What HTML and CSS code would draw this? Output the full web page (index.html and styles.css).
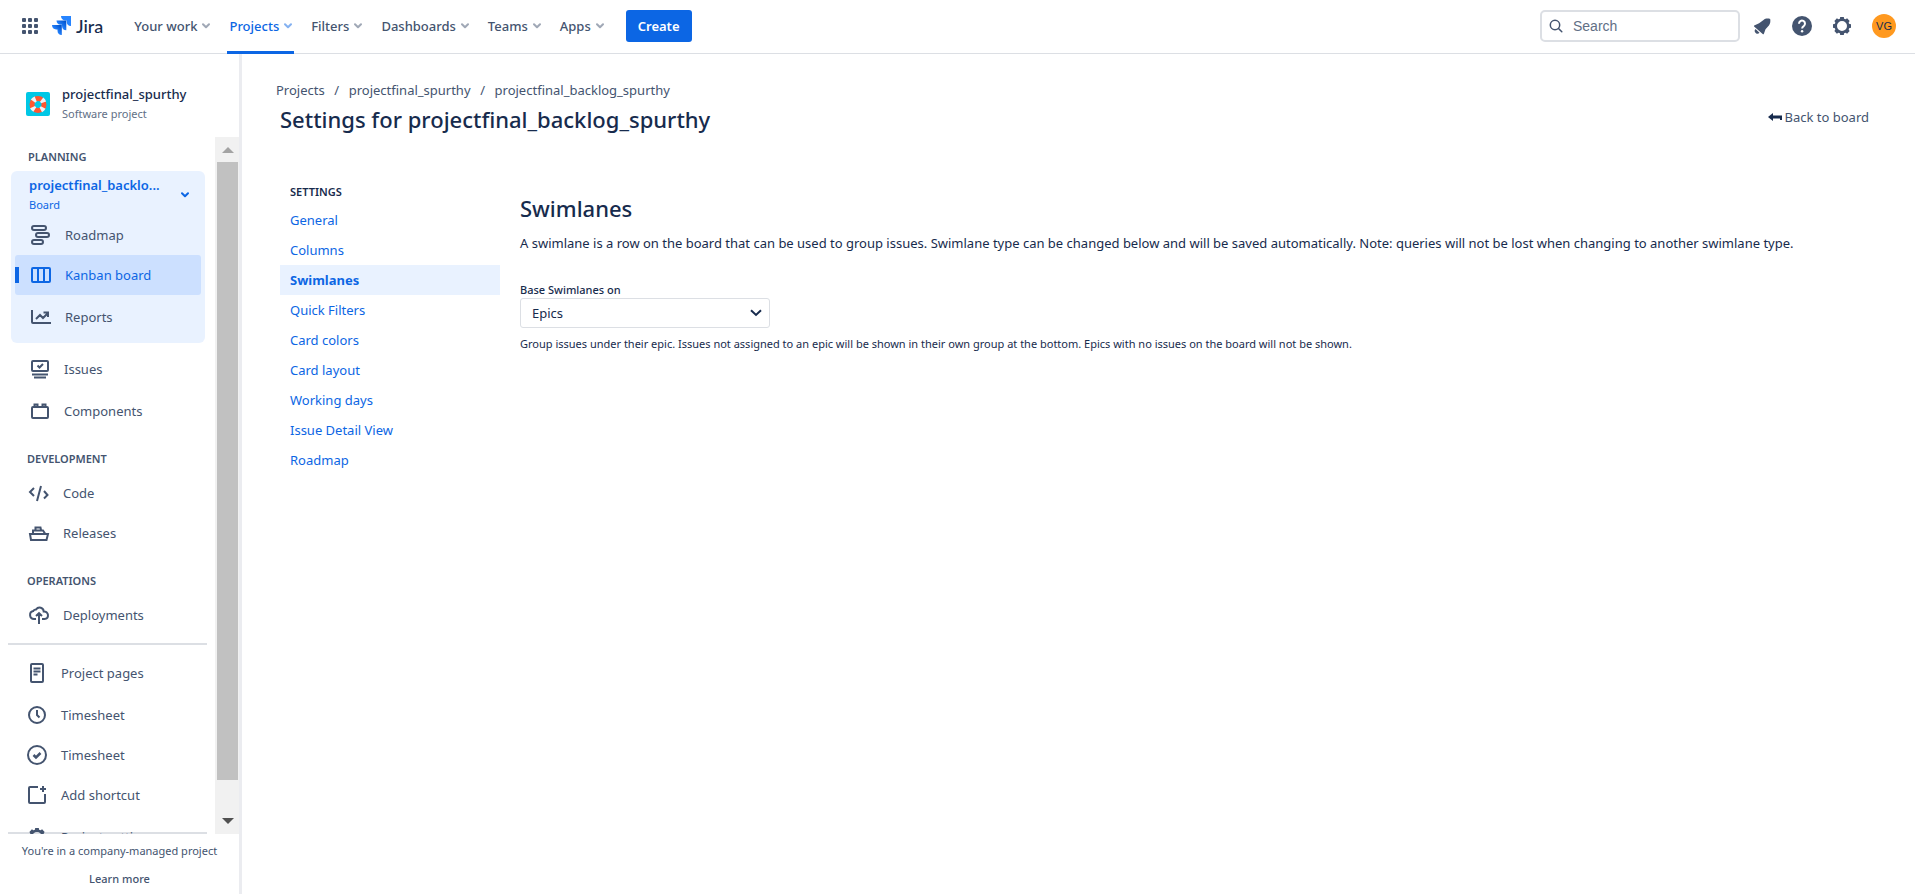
FILE: index.html
```html
<!DOCTYPE html>
<html lang="en">
<head>
<meta charset="utf-8">
<title>Settings for projectfinal_backlog_spurthy - Jira</title>
<link rel="stylesheet" href="styles.css">
</head>
<body>
<svg class="sprite" aria-hidden="true">
  <symbol id="chev" viewBox="0 0 8 6"><path d="M1 1.2l3 3 3-3" fill="none" stroke="currentColor" stroke-width="2" stroke-linecap="round" stroke-linejoin="round"/></symbol>
  <symbol id="gear" viewBox="0 0 24 24"><circle cx="12" cy="12" r="6.2" fill="none" stroke="currentColor" stroke-width="2.4"/><g fill="currentColor"><g id="teeth"><path d="M10.200 3h3.600l.6 3h-4.800zM10.200 21h3.600l.6-3h-4.800z"/></g><use href="#teeth" transform="rotate(45 12 12)"/><use href="#teeth" transform="rotate(90 12 12)"/><use href="#teeth" transform="rotate(135 12 12)"/></g></symbol>
</svg>
<header class="topbar">
  <button class="icon-btn switcher" aria-label="App switcher">
    <svg width="16" height="16" viewBox="0 0 16 16" fill="currentColor"><rect width="4" height="4" rx="1"/><rect x="6" width="4" height="4" rx="1"/><rect x="12" width="4" height="4" rx="1"/><rect y="6" width="4" height="4" rx="1"/><rect x="6" y="6" width="4" height="4" rx="1"/><rect x="12" y="6" width="4" height="4" rx="1"/><rect y="12" width="4" height="4" rx="1"/><rect x="6" y="12" width="4" height="4" rx="1"/><rect x="12" y="12" width="4" height="4" rx="1"/></svg>
  </button>
  <a class="brand" href="#">
    <svg width="19" height="19" viewBox="0 0 19 19"><defs><linearGradient id="g1" x1="1" y1="0" x2="0" y2="1"><stop offset="0.100" stop-color="#0052cc"/><stop offset=".6" stop-color="#2684ff"/></linearGradient></defs><path d="M9 0h10v10a4.500 4.500 0 0 1-4.300-4.500V4.400h-1.600A4.500 4.500 0 0 1 9 0z" fill="#2684ff"/><path d="M4.500 4.500h9.800v9.700A4.500 4.500 0 0 1 10 9.900V8.800H8.700a4.500 4.500 0 0 1-4.200-4.300z" fill="url(#g1)"/><path d="M0 9h9.800v10a4.500 4.500 0 0 1-4.300-4.500v-1.100H4.200A4.500 4.500 0 0 1 0 9z" fill="url(#g1)"/></svg>
    <span>Jira</span>
  </a>
  <nav class="menu" aria-label="Main">
    <button class="menu-item">Your work<svg class="chev"><use href="#chev"/></svg></button>
    <button class="menu-item is-active">Projects<svg class="chev"><use href="#chev"/></svg></button>
    <button class="menu-item">Filters<svg class="chev"><use href="#chev"/></svg></button>
    <button class="menu-item">Dashboards<svg class="chev"><use href="#chev"/></svg></button>
    <button class="menu-item">Teams<svg class="chev"><use href="#chev"/></svg></button>
    <button class="menu-item">Apps<svg class="chev"><use href="#chev"/></svg></button>
  </nav>
  <button class="create">Create</button>
  <div class="tools">
    <label class="search">
      <svg width="14" height="14" viewBox="0 0 14 14" fill="none" stroke="currentColor" stroke-width="1.500" stroke-linecap="round"><circle cx="6" cy="6" r="4.700"/><path d="M9.500 9.500l3.300 3.300"/></svg>
      <input type="text" placeholder="Search" aria-label="Search">
    </label>
    <button class="icon-btn" aria-label="Notifications"><svg width="24" height="24" viewBox="0 0 24 24" fill="currentColor"><path d="M4.200 11.500c-.4.400-.2 1 .2 1.300l8.300 7.300c.5.400 1 .2 1.200-.3l1.600-4.600 3.400-3.800c1.400-1.700 1.700-4 1.300-6.500-2.600-.8-5-.4-6.700 1L9.100 9.300z"/><path d="M5.500 15.100l4 3.600a2.500 2.500 0 0 1-4-3.600z"/></svg></button>
    <button class="icon-btn" aria-label="Help"><svg width="24" height="24" viewBox="0 0 24 24"><circle cx="12" cy="12" r="10" fill="currentColor"/><path d="M9 9.700a3 3 0 1 1 4.700 2.400c-1.100.7-1.600 1.200-1.600 2.400" fill="none" stroke="#fff" stroke-width="2"/><circle cx="12.100" cy="17.200" r="1.200" fill="#fff"/></svg></button>
    <button class="icon-btn" aria-label="Settings"><svg width="24" height="24"><use href="#gear"/></svg></button>
    <button class="avatar" aria-label="Your profile">VG</button>
  </div>
</header>
<div class="shell">
  <aside class="sidebar">
    <div class="project">
      <svg width="24" height="24" viewBox="0 0 24 24"><rect width="24" height="24" rx="2" fill="#00c7e5"/><circle cx="12" cy="12.500" r="6" fill="none" stroke="#ff5630" stroke-width="5"/><circle cx="12" cy="12.500" r="6" fill="none" stroke="#ebf4fa" stroke-width="5.400" stroke-dasharray="3.200 6.225" stroke-dashoffset="-3.100"/></svg>
      <div>
        <div class="project-name">projectfinal_spurthy</div>
        <div class="project-type">Software project</div>
      </div>
    </div>
    <div class="side-body">
      <nav class="side-nav" aria-label="Project">
        <h2 class="side-heading first">Planning</h2>
        <div class="board">
          <button class="board-head"><span class="board-text"><b>projectfinal_backlo...</b><span>Board</span></span><svg class="chev"><use href="#chev"/></svg></button>
          <a class="row" href="#"><svg viewBox="0 0 24 24"><rect x="3" y="3" width="14" height="4" rx="2"/><rect x="7" y="10" width="13" height="4" rx="2"/><rect x="3" y="17" width="11" height="4" rx="2"/></svg>Roadmap</a>
          <a class="row selected" href="#"><svg viewBox="0 0 24 24"><rect x="3" y="5" width="18" height="14" rx="1"/><path d="M9 5v14M15 5v14"/></svg>Kanban board</a>
          <a class="row spaced" href="#"><svg viewBox="0 0 24 24"><path d="M3 5v12a1 1 0 0 0 1 1h18M7 14l4-4 3 3 5-5M14.500 7.500H19V12"/></svg>Reports</a>
        </div>
        <div class="group general">
          <a class="row" href="#"><svg viewBox="0 0 24 24"><rect x="4" y="4" width="16" height="10" rx="1"/><path d="M9.500 8.500l2 2 3.500-3.500M4 17.500h16M6 20.500h12"/></svg>Issues</a>
          <a class="row spaced" href="#"><svg viewBox="0 0 24 24"><rect x="4" y="8" width="16" height="11" rx="1"/><path d="M6.500 7.500V5.500h3v2M14.500 7.500V5.500h3v2"/></svg>Components</a>
        </div>
        <h2 class="side-heading">Development</h2>
        <div class="group">
          <a class="row" href="#"><svg viewBox="0 0 24 24"><path d="M7 7l-4 4 4 4M14 5l-4 15M17 10l3.500 4-3.500 3.500"/></svg>Code</a>
          <a class="row" href="#"><svg viewBox="0 0 24 24"><path d="M3 13h18l-1.500 6H4zM6 12.500V9.500h10l2 3M8.500 9V6.500h5L14 9"/></svg>Releases</a>
        </div>
        <h2 class="side-heading">Operations</h2>
        <div class="group">
          <a class="row" href="#"><svg viewBox="0 0 24 24"><path d="M9 16H7a4 4 0 0 1-.8-7.900C7 6.500 8.600 6.600 9 6.500c2.600-3.600 7.600-1.800 7.700 2 5.300-.5 5.800 7 .8 7.500H15M12 21v-9.500M9 13l3-2.800 3 2.800"/></svg>Deployments</a>
        </div>
        <hr class="divider">
        <div class="group links">
          <a class="row" href="#"><svg viewBox="0 0 24 24"><rect x="6" y="3" width="12" height="18" rx="1"/><path d="M8.500 7.500h7M8.500 10.500h7M8.500 13.500h4"/></svg>Project pages</a>
          <a class="row spaced" href="#"><svg viewBox="0 0 24 24"><circle cx="12" cy="12" r="8"/><path d="M12 7v5l2.500 2.500"/></svg>Timesheet</a>
          <a class="row" href="#"><svg viewBox="0 0 24 24"><circle cx="12" cy="12" r="9"/><path d="M8.500 12l2.500 2.500 4.500-4.500" stroke-width="2.500"/></svg>Timesheet</a>
          <a class="row" href="#"><svg viewBox="0 0 24 24"><path d="M13 4H5a1 1 0 0 0-1 1v14a1 1 0 0 0 1 1h14a1 1 0 0 0 1-1v-8M18 3v6M15 6h6"/></svg>Add shortcut</a>
          <a class="row spaced" href="#"><svg viewBox="0 0 24 24" class="plain"><use href="#gear"/></svg>Project settings</a>
        </div>
      </nav>
      <div class="scrollbar" aria-hidden="true">
        <svg width="12" height="6" viewBox="0 0 12 6"><path d="M0 6h12L6 0z" fill="#a3a3a3"/></svg>
        <div class="thumb"></div>
        <svg width="12" height="6" viewBox="0 0 12 6"><path d="M0 0h12L6 6z" fill="#505050"/></svg>
      </div>
    </div>
    <footer class="side-foot">
      <p>You're in a company-managed project</p>
      <a href="#">Learn more</a>
    </footer>
  </aside>
  <main class="main">
    <nav class="crumbs" aria-label="Breadcrumb"><a href="#">Projects</a><span>/</span><a href="#">projectfinal_spurthy</a><span>/</span><a href="#">projectfinal_backlog_spurthy</a></nav>
    <div class="title-row">
      <h1>Settings for projectfinal_backlog_spurthy</h1>
      <a class="back" href="#"><svg width="14" height="8" viewBox="0 0 14 8"><path d="M0 4l5-4v2.500h9V7h-2V5.500H5V8z" fill="#172b4d"/></svg>Back to board</a>
    </div>
    <div class="columns">
      <nav class="settings" aria-label="Settings">
        <h2>Settings</h2>
        <a href="#">General</a>
        <a href="#">Columns</a>
        <a href="#" class="current">Swimlanes</a>
        <a href="#">Quick Filters</a>
        <a href="#">Card colors</a>
        <a href="#">Card layout</a>
        <a href="#">Working days</a>
        <a href="#">Issue Detail View</a>
        <a href="#">Roadmap</a>
      </nav>
      <section class="content">
        <h2>Swimlanes</h2>
        <p class="intro">A swimlane is a row on the board that can be used to group issues. Swimlane type can be changed below and will be saved automatically. Note: queries will not be lost when changing to another swimlane type.</p>
        <label class="field-label" for="base">Base Swimlanes on</label>
        <div class="select-wrap">
          <select id="base"><option>Epics</option></select>
          <svg width="12" height="8" viewBox="0 0 12 8"><path d="M1 1.300l5 4.700 5-4.700" fill="none" stroke="#172b4d" stroke-width="2"/></svg>
        </div>
        <p class="hint">Group issues under their epic. Issues not assigned to an epic will be shown in their own group at the bottom. Epics with no issues on the board will not be shown.</p>
      </section>
    </div>
  </main>
</div>
</body>
</html>
```

FILE: styles.css
```css
* { box-sizing: border-box; }
body {
  margin: 0;
  height: 100vh;
  display: flex;
  flex-direction: column;
  overflow: hidden;
  background: #fff;
  color: #172b4d;
  font: 13px/20px "Noto Sans", sans-serif;
}
h1, h2, p { margin: 0; }
a { color: inherit; text-decoration: none; }
button { border: 0; padding: 0; background: none; color: inherit; font: inherit; cursor: pointer; }
.sprite { position: absolute; width: 0; height: 0; }

.topbar {
  flex: none;
  height: 54px;
  display: flex;
  align-items: center;
  padding: 0 19px 2px 22px;
  border-bottom: 1px solid #dcdfe4;
  color: #44546f;
}
.icon-btn { display: flex; color: #44546f; }
.brand { display: flex; align-items: center; gap: 5px; margin-left: 14px; color: #172b4d; font: 500 18px/24px "Lato", sans-serif; }
.menu { display: flex; align-self: stretch; gap: 15px; margin: 0 20px 0 29px; }
.menu-item { position: relative; display: flex; align-items: center; gap: 5px; padding: 0 2px; font-weight: 500; }
.chev { width: 8px; height: 6px; flex: none; }
.menu-item .chev { opacity: .5; }
.menu-item.is-active { color: #0c66e4; }
.menu-item.is-active::after { content: ""; position: absolute; left: 0; right: 0; bottom: -3px; height: 3px; background: #0c66e4; }
.create { height: 32px; padding: 0 12px; border-radius: 3px; background: #0c66e4; color: #fff; font-weight: 600; }
.tools { display: flex; align-items: center; gap: 16px; margin-left: auto; }
.search { display: flex; align-items: center; gap: 10px; width: 200px; height: 32px; margin-right: -6px; padding: 0 7px; border: 2px solid #dcdfe4; border-radius: 5px; }
.search input { flex: 1; min-width: 0; border: 0; outline: 0; padding: 0; background: none; font: 14px/20px "Liberation Sans", sans-serif; color: #172b4d; }
.search input::placeholder { color: #626f86; opacity: 1; }
.avatar { width: 24px; height: 24px; margin-left: 2px; border-radius: 50%; background: #ff991f; color: #172b4d; font: 11px/24px "Liberation Sans", sans-serif; }

.shell { flex: 1; min-height: 0; display: flex; }
.sidebar { flex: none; width: 242px; display: flex; flex-direction: column; border-right: 3px solid #ebecf0; color: #44546f; }
.project { flex: none; display: flex; align-items: center; gap: 12px; height: 83px; padding: 16px 16px 0 26px; }
.project-name { font-weight: 500; color: #172b4d; }
.project-type { font-size: 11px; color: #626f86; }
.side-body { flex: 1; min-height: 0; display: flex; }
.side-nav { flex: 1; min-width: 0; margin: 0 8px; overflow: hidden; background: linear-gradient(#dcdfe4, #dcdfe4) bottom / 100% 2px no-repeat; }
.side-heading { margin: 18px 0 4px; padding-left: 19px; font-size: 11px; line-height: 20px; font-weight: 600; text-transform: uppercase; }
.side-heading.first { margin-top: 10px; padding-left: 20px; }
.board { margin: 0 2px 0 3px; padding: 4px 4px 6px; border-radius: 6px; background: #e9f2ff; color: #44546f; }
.board-head { display: flex; align-items: center; justify-content: space-between; width: 100%; padding: 0 12px 0 14px; color: #0c66e4; text-align: left; }
.board-text { display: flex; flex-direction: column; }
.board-text b { font-weight: 600; }
.board-text span { font-size: 11px; }
.row { position: relative; display: flex; align-items: center; gap: 12px; height: 40px; padding-left: 14px; border-radius: 3px; }
.row.spaced { margin-top: 2px; }
.row svg { flex: none; width: 24px; height: 24px; fill: none; stroke: currentColor; stroke-width: 2; }
.row svg.plain { stroke: none; fill: currentColor; }
.row.selected { background: #cce0ff; color: #0c66e4; }
.row.selected::before { content: ""; position: absolute; left: 0; top: 12px; width: 4px; height: 16px; background: #0c66e4; }
.group { padding-left: 5px; }
.general { padding: 6px 0 0 6px; }
.links { padding-left: 3px; }
.divider { height: 2px; margin: 8px 0; border: 0; background: #dcdfe4; }
.scrollbar { flex: none; width: 24px; display: flex; flex-direction: column; align-items: center; padding: 10px 1px 10px 2px; background: #f1f1f1; }
.thumb { flex: none; align-self: stretch; height: calc(100% - 59px); margin: 9px 0 auto; background: #c1c1c1; }
.side-foot { flex: none; height: 60px; padding-top: 7px; text-align: center; font-size: 11px; line-height: 20px; }
.side-foot a { display: block; margin-top: 8px; font-weight: 500; }

.main { flex: 1; min-width: 0; padding: 26px 46px 0 34px; }
.crumbs { display: flex; color: #44546f; }
.crumbs span { width: 24px; text-align: center; }
.title-row { display: flex; align-items: flex-start; justify-content: space-between; padding-left: 4px; }
h1, .content h2 { font-size: 22px; line-height: 38px; font-weight: 500; }
.back { display: flex; align-items: center; gap: 2px; padding-top: 7px; color: #44546f; }
.columns { display: flex; gap: 20px; margin-top: 42px; padding-left: 4px; }
.settings { flex: none; width: 220px; }
.settings h2 { padding: 2px 10px 3px; font-size: 11px; line-height: 20px; font-weight: 600; text-transform: uppercase; }
.settings a { display: block; padding: 0 10px; line-height: 30px; color: #0c66e4; }
.settings .current { background: #e9f2ff; font-weight: 700; }
.content { flex: 1; min-width: 0; padding-top: 9px; }
.intro { margin-top: 6px; }
.field-label { display: block; margin-top: 29px; font-size: 11px; line-height: 16px; font-weight: 500; }
.select-wrap { position: relative; width: 250px; }
.select-wrap select { display: block; width: 100%; height: 30px; padding: 0 30px 0 11px; border: 1px solid #dcdfe4; border-radius: 3px; background: #fff; color: #172b4d; font: inherit; appearance: none; }
.select-wrap svg { position: absolute; right: 8px; top: 11px; pointer-events: none; }
.hint { margin-top: 6px; font-size: 11px; }
```
